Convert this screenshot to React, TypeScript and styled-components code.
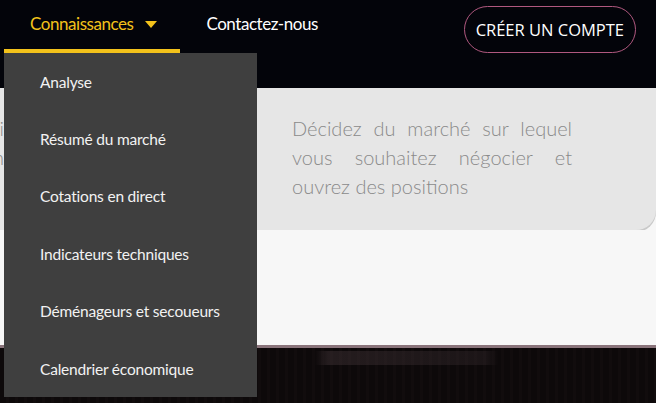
import React from 'react';
import styled, { createGlobalStyle } from 'styled-components';

const GlobalStyle = createGlobalStyle`
  html, body {
    margin: 0;
    padding: 0;
    overflow: hidden;
    background: #f7f7f7;
  }
  * { box-sizing: border-box; }
`;

const Page = styled.div`
  position: relative;
  width: 656px;
  height: 403px;
  overflow: hidden;
  font-family: Lato, 'Noto Sans', sans-serif;
`;

const Header = styled.header`
  height: 88px;
  background: #03040a;
  display: flex;
  align-items: flex-start;
  justify-content: space-between;
  padding: 0 20px 0 4px;
`;

const Nav = styled.nav`
  display: flex;
  align-items: flex-start;
`;

const NavItem = styled.div<{ $active?: boolean }>`
  position: relative;
  height: 53px;
  display: flex;
  align-items: flex-start;
  gap: 12px;
  padding: 13px ${({ $active }) => ($active ? '23px' : '10px')} 0 26px;
  font-size: 17px;
  letter-spacing: -0.45px;
  color: ${({ $active }) => ($active ? '#f3c21b' : '#ffffff')};
  border-bottom: 4px solid ${({ $active }) => ($active ? '#f3c21b' : 'transparent')};
`;

const Caret = styled.span`
  width: 0;
  height: 0;
  margin-top: 8px;
  border-left: 6px solid transparent;
  border-right: 6px solid transparent;
  border-top: 7px solid #f3c21b;
`;

const Dropdown = styled.ul`
  position: absolute;
  top: 53px;
  left: 4px;
  width: 253px;
  margin: 0;
  padding: 0;
  list-style: none;
  background: #3f3f3f;
  z-index: 5;
`;

const DropdownItem = styled.li`
  height: 57.4px;
  display: flex;
  align-items: center;
  padding-left: 36px;
  font-size: 15.5px;
  letter-spacing: -0.2px;
  color: #f2f2f2;
`;

const AccountButton = styled.button`
  margin-top: 6px;
  height: 47px;
  padding: 0 11px;
  background: transparent;
  border: 1.5px solid #b0587f;
  border-radius: 24px;
  color: #ffffff;
  font-family: 'Open Sans', 'Noto Sans', sans-serif;
  font-size: 16.5px;
  letter-spacing: 0;
`;

const Band = styled.section`
  width: calc(100% + 312px);
  margin-left: -312px;
  background: #e6e6e6;
  border-bottom-right-radius: 20px;
  box-shadow: 0 2px 0 #c9c9c9;
  display: grid;
  grid-template-columns: 280px 280px;
  column-gap: 288px;
  padding: 26px 0 29px 36px;
`;

const CardText = styled.p`
  margin: 0;
  font-weight: 300;
  font-size: 20px;
  line-height: 29px;
  text-align: justify;
  color: #8a8a8a;
`;

const WhiteArea = styled.div`
  height: 118px;
  background: #f7f7f7;
  border-bottom: 3px solid #8a747b;
`;

const Hero = styled.div`
  height: 60px;
  background:
    linear-gradient(90deg, transparent 48%, rgba(80, 64, 68, 0.35) 50%, rgba(60, 48, 52, 0.3) 74%, transparent 76%) 0 3px / 100% 14px no-repeat,
    repeating-linear-gradient(90deg, #0d090a 0 6px, #110c0d 6px 9px),
    #0c0809;
`;

const menu = [
  'Analyse',
  'Résumé du marché',
  'Cotations en direct',
  'Indicateurs techniques',
  'Déménageurs et secoueurs',
  'Calendrier économique',
];

export default function App() {
  return (
    <Page>
      <GlobalStyle />
      <Header>
        <Nav>
          <NavItem $active>
            Connaissances
            <Caret />
          </NavItem>
          <NavItem>Contactez-nous</NavItem>
        </Nav>
        <AccountButton type="button">CRÉER UN COMPTE</AccountButton>
      </Header>
      <Dropdown>
        {menu.map((item) => (
          <DropdownItem key={item}>{item}</DropdownItem>
        ))}
      </Dropdown>
      <Band>
        <CardText>
          Choisissez la plateforme qui vous convient et ouvrez un compte
        </CardText>
        <CardText>
          Décidez du marché sur lequel vous souhaitez négocier et ouvrez des positions
        </CardText>
      </Band>
      <WhiteArea />
      <Hero />
    </Page>
  );
}
